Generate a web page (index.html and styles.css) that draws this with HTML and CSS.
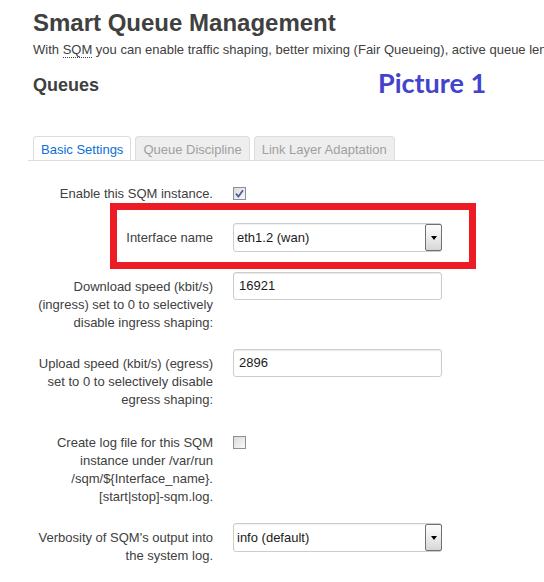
FILE: index.html
```html
<!DOCTYPE html>
<html lang="en">
<head>
<meta charset="utf-8">
<title>Smart Queue Management</title>
<link rel="stylesheet" href="styles.css">
</head>
<body>
<div class="page">
  <h2 class="title">Smart Queue Management</h2>
  <p class="desc">With <abbr class="abbr" title="Smart Queue Management">SQM</abbr> you can enable traffic shaping, better mixing (Fair Queueing), active queue length management (AQM) and prioritisation on one network interface.</p>
  <h3 class="section">Queues</h3>

  <ul class="tabs">
    <li class="tab tab-active">Basic Settings</li>
    <li class="tab">Queue Discipline</li>
    <li class="tab">Link Layer Adaptation</li>
  </ul>

  <div class="form">
    <div class="row">
      <div class="label">Enable this SQM instance.</div>
      <div class="field field-check">
        <svg class="checkbox" width="13" height="13" viewBox="0 0 13 13">
          <defs>
            <linearGradient id="cbg1" x1="0" y1="0" x2="1" y2="1">
              <stop offset="0" stop-color="#d9d9d9"/>
              <stop offset="1" stop-color="#fbfbfb"/>
            </linearGradient>
          </defs>
          <rect x="0.5" y="0.5" width="12" height="12" fill="url(#cbg1)" stroke="#8e8f8f"/>
          <path d="M3 6.6 L5.4 9.6 L10 3.2" fill="none" stroke="#4b5c9c" stroke-width="1.7"/>
        </svg>
      </div>
    </div>

    <div class="row">
      <div class="label">Interface name</div>
      <div class="field">
        <div class="select" role="combobox">
          <span class="select-text">eth1.2 (wan)</span>
          <span class="select-btn"><span class="caret"></span></span>
        </div>
      </div>
    </div>

    <div class="row">
      <div class="label">Download speed (kbit/s)<br>(ingress) set to 0 to selectively<br>disable ingress shaping:</div>
      <div class="field">
        <div class="input">16921</div>
      </div>
    </div>

    <div class="row row-tall">
      <div class="label">Upload speed (kbit/s) (egress)<br>set to 0 to selectively disable<br>egress shaping:</div>
      <div class="field">
        <div class="input">2896</div>
      </div>
    </div>

    <div class="row">
      <div class="label">Create log file for this SQM<br>instance under /var/run<br>/sqm/${Interface_name}.<br>[start|stop]-sqm.log.</div>
      <div class="field field-check">
        <svg class="checkbox" width="13" height="13" viewBox="0 0 13 13">
          <defs>
            <linearGradient id="cbg2" x1="0" y1="0" x2="1" y2="1">
              <stop offset="0" stop-color="#d9d9d9"/>
              <stop offset="1" stop-color="#fbfbfb"/>
            </linearGradient>
          </defs>
          <rect x="0.5" y="0.5" width="12" height="12" fill="url(#cbg2)" stroke="#8e8f8f"/>
        </svg>
      </div>
    </div>

    <div class="row">
      <div class="label">Verbosity of SQM's output into<br>the system log.</div>
      <div class="field">
        <div class="select" role="combobox">
          <span class="select-text">info (default)</span>
          <span class="select-btn"><span class="caret"></span></span>
        </div>
      </div>
    </div>
  </div>
</div>

<div class="annot-label">Picture 1</div>
<div class="annot-box"></div>
</body>
</html>
```
FILE: styles.css
```css
html, body {
  margin: 0;
  padding: 0;
  background: #ffffff;
  overflow: hidden;
}

body {
  font-family: "Liberation Sans", Arial, sans-serif;
  font-size: 13px;
  color: #404040;
  width: 544px;
  height: 582px;
  position: relative;
}

.page {
  padding-left: 33px;
  overflow: hidden;
}

.title {
  margin: 9px 0 0 0;
  font-size: 24px;
  line-height: 28px;
  font-weight: bold;
  color: #404040;
  white-space: nowrap;
}

.desc {
  margin: 4px 0 0 0;
  font-size: 13px;
  line-height: 18px;
  white-space: nowrap;
  color: #404040;
}

.abbr {
  text-decoration: none;
  border-bottom: 1px dotted #404040;
}

.section {
  margin: 15px 0 0 0;
  font-size: 18px;
  line-height: 22px;
  font-weight: bold;
  color: #404040;
}

.tabs {
  list-style: none;
  margin: 40px 0 0 -5px;
  padding: 0 0 0 5px;
  display: flex;
  gap: 4px;
  border-bottom: 1px solid #dddddd;
}

.tab {
  padding: 4px 7px 1px 7px;
  line-height: 18px;
  font-size: 13px;
  color: #a0a0a0;
  background: #eeeeee;
  border: 1px solid #dddddd;
  border-bottom: none;
  border-radius: 4px 4px 0 0;
  white-space: nowrap;
}

.tab-active {
  background: #ffffff;
  color: #0b6fd6;
}

.form {
  margin-top: 18px;
}

.row {
  display: flex;
  align-items: flex-start;
  gap: 20px;
  padding-bottom: 17px;
}

.row-tall {
  padding-bottom: 19px;
}

.label {
  width: 180px;
  flex: none;
  text-align: right;
  padding-top: 6px;
  line-height: 18px;
  white-space: nowrap;
  color: #404040;
}

.field {
  min-height: 32px;
}

.field-check {
  min-height: 0;
  height: 27px;
}

.checkbox {
  display: block;
  margin-top: 8px;
}

.input {
  box-sizing: border-box;
  width: 209px;
  height: 28px;
  border: 1px solid #cccccc;
  border-radius: 3px;
  box-shadow: inset 0 1px 1px rgba(0, 0, 0, 0.08);
  padding: 0 5px;
  line-height: 26px;
  font-size: 13px;
  color: #1a1a1a;
}

.select {
  box-sizing: border-box;
  width: 209px;
  height: 29px;
  border: 1px solid #cccccc;
  border-radius: 3px;
  box-shadow: inset 0 1px 1px rgba(0, 0, 0, 0.06);
  display: flex;
  align-items: stretch;
}

.select-text {
  flex: 1;
  padding-left: 3px;
  line-height: 27px;
  font-size: 13px;
  color: #1a1a1a;
}

.select-btn {
  box-sizing: border-box;
  width: 17px;
  margin-right: -1px;
  border: 1px solid #707070;
  border-radius: 2px;
  background: linear-gradient(to bottom, #fdfdfd 0%, #ececec 50%, #d6d6d6 100%);
  display: flex;
  align-items: center;
  justify-content: center;
}

.caret {
  width: 0;
  height: 0;
  border-left: 3.5px solid transparent;
  border-right: 3.5px solid transparent;
  border-top: 4px solid #000000;
}

.annot-label {
  position: absolute;
  left: 378px;
  top: 68px;
  font-family: Lato, "Open Sans", sans-serif;
  font-weight: bold;
  font-size: 27px;
  line-height: 30px;
  color: #4343cc;
  white-space: nowrap;
}

.annot-box {
  position: absolute;
  left: 110px;
  top: 203px;
  width: 366px;
  height: 66px;
  box-sizing: border-box;
  border: 7px solid #ed1c24;
}
```
